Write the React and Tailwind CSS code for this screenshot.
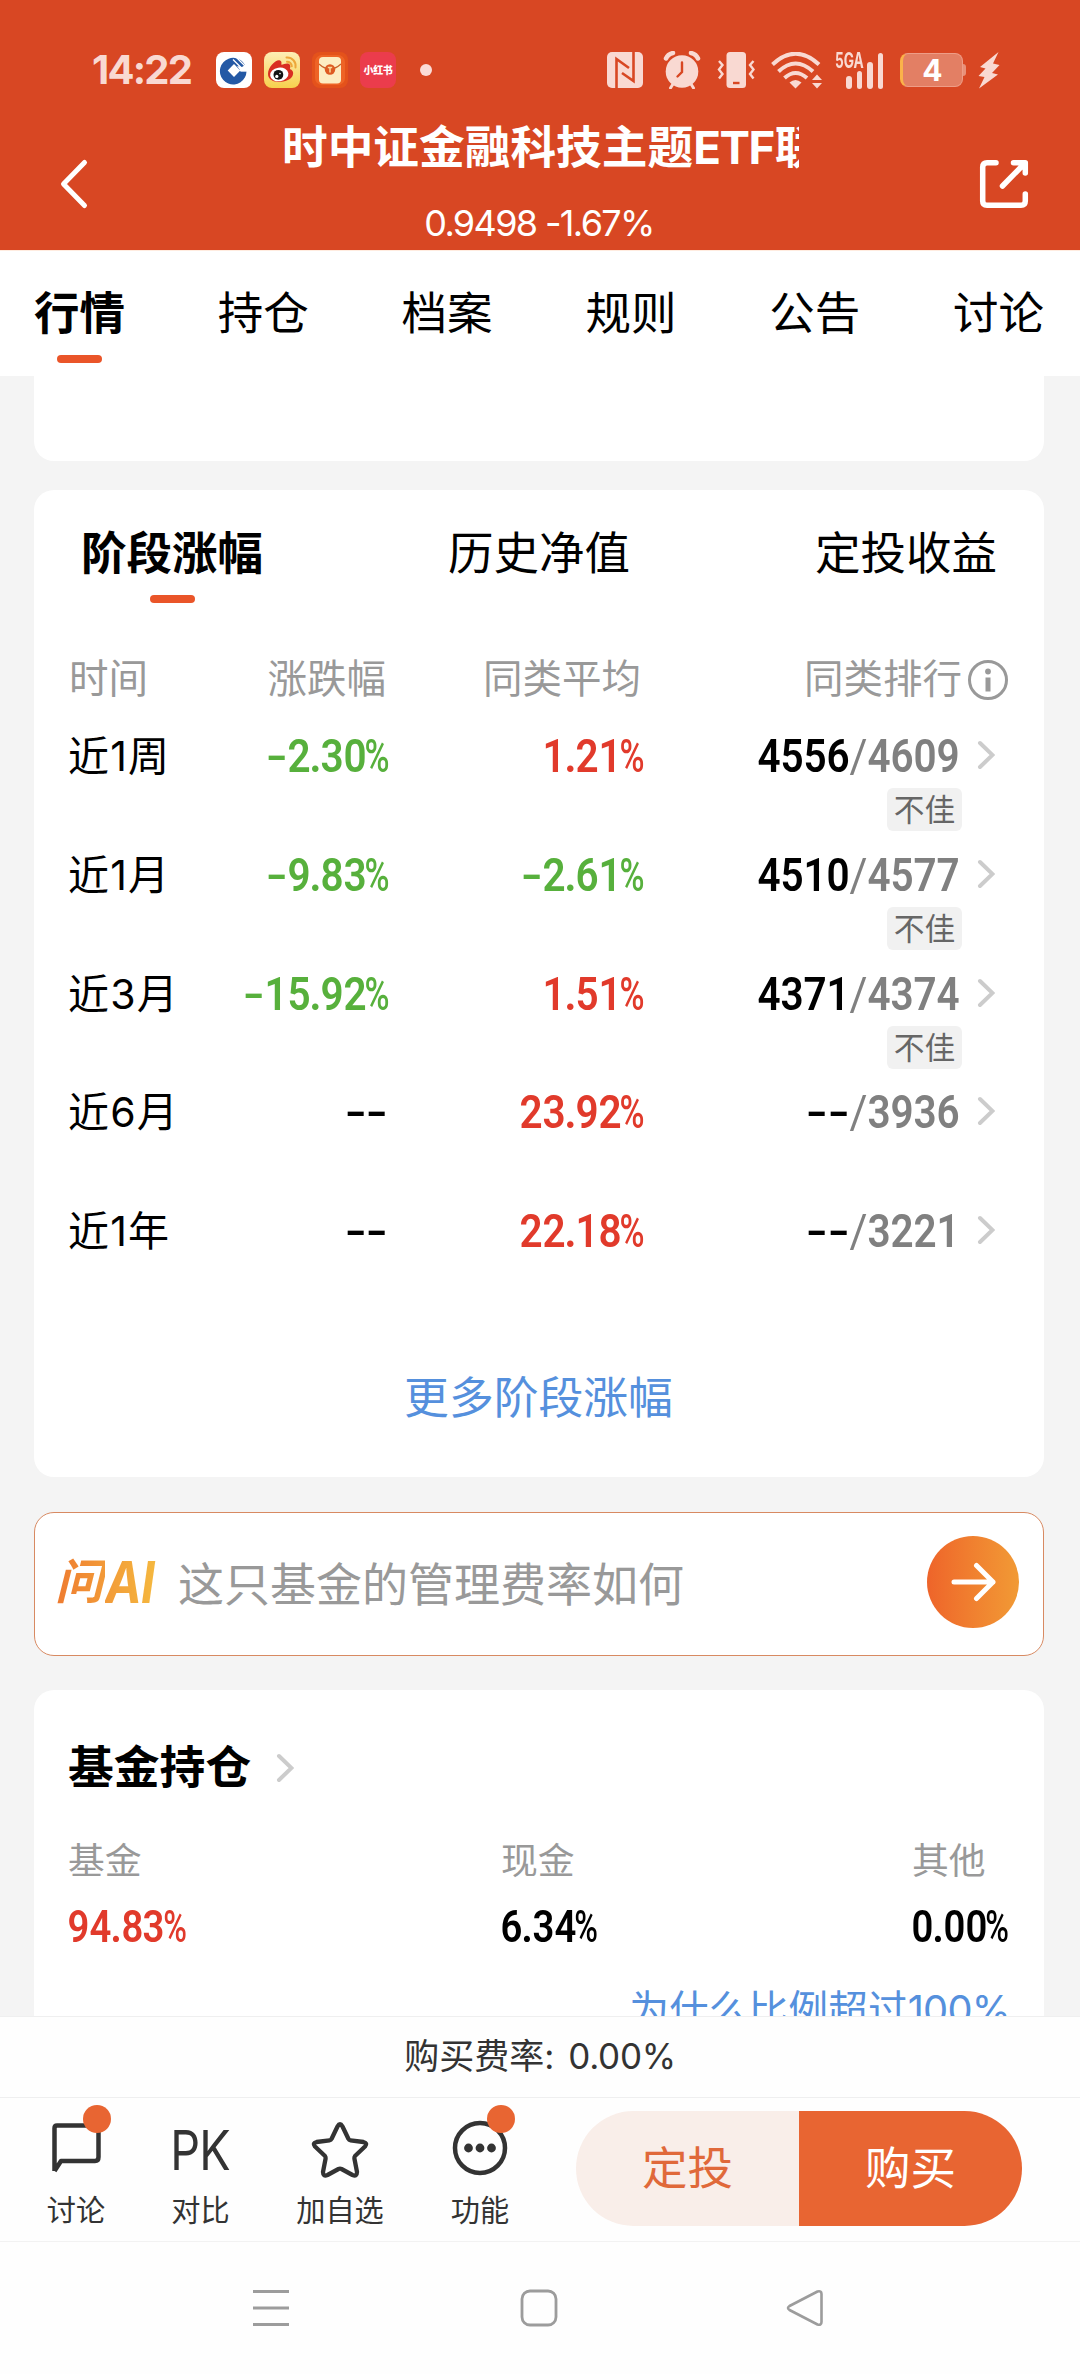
const tabs = ["行情", "持仓", "档案", "规则", "公告", "讨论"];

const periods = [
  { id: 1, name: "近1周", change: "-2.30%", average: "1.21%", rank: "4556", total: "4609", tag: "不佳" },
  { id: 2, name: "近1月", change: "-9.83%", average: "-2.61%", rank: "4510", total: "4577", tag: "不佳" },
  { id: 3, name: "近3月", change: "-15.92%", average: "1.51%", rank: "4371", total: "4374", tag: "不佳" },
  { id: 4, name: "近6月", change: "--", average: "23.92%", rank: "--", total: "3936" },
  { id: 5, name: "近1年", change: "--", average: "22.18%", rank: "--", total: "3221" }
];

const holdings = [
  { id: 1, name: "基金", value: "94.83%", color: "text-[#e13a2b]", width: "w-[433px]" },
  { id: 2, name: "现金", value: "6.34%", color: "text-black", width: "w-[411px]" },
  { id: 3, name: "其他", value: "0.00%", color: "text-black", width: "w-[96px]" }
];

// Character cells for the condensed number face
function cell(char) {
  if (char === "-") return { box: "w-[0.47em]", glyph: "scale-x-[1.35] font-medium" };
  if (char === ".") return { box: "w-[0.22em]", glyph: "scale-x-[0.95]" };
  if (char === "/") return { box: "w-[0.4em]", glyph: "scale-x-[0.95] font-normal" };
  if (char === "%") return { box: "w-[0.47em]", glyph: "scale-x-[0.74] font-medium" };
  return { box: "w-[0.5em]", glyph: "scale-x-[0.88]" };
}

function Num({ text, className }) {
  return (
    <span className={`flex font-[Roboto,sans-serif] font-semibold ${className}`}>
      {text.split("").map((char, i) => (
        <span key={i} className={`flex justify-center ${cell(char).box}`}>
          <span className={cell(char).glyph}>{char}</span>
        </span>
      ))}
    </span>
  );
}

function toneOf(text) {
  if (text === "--") return "text-black";
  return text.startsWith("-") ? "text-[#57b03c]" : "text-[#e13a2b]";
}

function Chevron() {
  return (
    <svg className="w-[18px] h-[30px]" viewBox="0 0 18 30" fill="none" stroke="#cccccc" strokeWidth="4" strokeLinecap="round">
      <path d="M3 3 L15.5 15 L3 27" />
    </svg>
  );
}

function StatusBar() {
  return (
    <div className="flex items-center h-[94px] pt-[46px] pl-[92px] text-[#f9d9d2]">
      <span className="w-[124px] text-[40px] font-bold leading-[48px] tracking-[-1.800px]">14:22</span>
      <div className="flex gap-3">
        <svg className="w-9 h-9" viewBox="0 0 36 36">
          <rect width="36" height="36" rx="8" fill="#fff" />
          <path d="M29 13 A13.3 13.3 0 1 0 30.5 19.5 L25 19.5 L21 14 L26 15z" fill="#2459a5" />
          <path d="M18 12 L24.3 18.5 L18 25 L11.700 18.500z" fill="#fff" />
          <path d="M20 5 L29 14 M17 7.500 L25 15.500" stroke="#fff" strokeWidth="1.300" />
          <path d="M24 18.600 H31" stroke="#fff" strokeWidth="1.500" />
        </svg>
        <svg className="w-9 h-9" viewBox="0 0 36 36">
          <defs>
            <linearGradient id="weibo" x1="0" y1="0" x2="0" y2="1">
              <stop offset="0" stopColor="#fdeeb5" />
              <stop offset="1" stopColor="#f7d04d" />
            </linearGradient>
          </defs>
          <rect width="36" height="36" rx="8" fill="url(#weibo)" />
          <path d="M4 22 C4 15 12 7 16 8.500 C18.500 9.500 17 12.500 17.500 12.800 C20 12 24.500 10 26 13 C27 15 25.500 17 26 17.300 C29 18 30 21 28.500 24 C25 31.500 4 33 4 22z" fill="#d92e22" />
          <ellipse cx="15.200" cy="22.500" rx="9.200" ry="6.800" fill="#fff" transform="rotate(-8 15 22)" />
          <circle cx="14.400" cy="22.800" r="4.900" fill="#141414" />
          <circle cx="12.800" cy="24.400" r="1.600" fill="#fff" />
          <circle cx="16" cy="21.600" r="0.800" fill="#fff" />
          <path d="M22.500 5.500 A8.500 8.500 0 0 1 31.500 15.500 M23 9.800 A4.600 4.600 0 0 1 27.800 14.200" fill="none" stroke="#eda73a" strokeWidth="2" strokeLinecap="round" />
        </svg>
        <svg className="w-9 h-9" viewBox="0 0 36 36">
          <rect width="36" height="36" rx="8" fill="#e4521b" />
          <rect x="3" y="3" width="30" height="30" rx="7" fill="#ee6426" />
          <rect x="7" y="5" width="22" height="26.500" rx="4" fill="#fdecc2" />
          <path d="M7 12 Q18 22 29 12" fill="none" stroke="#c8622a" strokeWidth="1.200" />
          <circle cx="18" cy="17.500" r="5.200" fill="#de5a22" />
          <path d="M15.800 15.500 H20.200 M18 15.500 V20.500" stroke="#fbd99a" strokeWidth="1.500" />
        </svg>
        <div className="flex items-center justify-center w-9 h-9 rounded-lg bg-[#eb3c4c] text-white text-[10px] font-black tracking-[-0.3px]">
          小红书
        </div>
      </div>
      <span className="w-3 h-3 ml-6 rounded-full bg-[#fbdcd6]" />

      <div className="flex items-center ml-[175px]">
        <svg className="w-9 h-9" viewBox="0 0 36 36">
          <rect width="36" height="36" rx="5" fill="currentColor" />
          <path d="M9.500 36 V7 L22 16 M26.500 0 V29 L15 21" fill="none" stroke="#d84723" strokeWidth="2.600" />
        </svg>
        <svg className="w-[38px] h-[38px] ml-5" viewBox="0 0 38 38" fill="none" stroke="currentColor" strokeLinecap="round">
          <circle cx="19" cy="20.500" r="16.300" fill="currentColor" stroke="none" />
          <path d="M3 7.500 Q5 3 10 2 M28 2 Q33 3 35 7.500" strokeWidth="4.500" />
          <path d="M10 33 L7.500 37 M28 33 L30.500 37" strokeWidth="3" />
          <path d="M19 11.500 V21 L14.500 25.500" stroke="#d84723" strokeWidth="2.400" />
        </svg>
        <svg className="w-[38px] h-9 ml-4" viewBox="0 0 38 36" fill="none" stroke="currentColor" strokeWidth="2.400">
          <rect x="9.500" y="0" width="19.500" height="36" rx="3.500" fill="currentColor" stroke="none" />
          <path d="M2 9 L5.500 13 L2 17.500 L5.500 22 L2 26.500 M36.500 9 L33 13 L36.500 17.500 L33 22 L36.500 26.500" />
          <path d="M16 31 H22.500" stroke="#d84723" />
        </svg>
        <svg className="w-[52px] h-[37px] ml-4" viewBox="0 0 52 37" fill="none" stroke="currentColor" strokeWidth="4">
          <path d="M1.500 12.500 Q24.500 -9 48 12.500 M7.500 19.500 Q24.500 3.500 42 19.500 M13.500 26 Q24.500 16 36 26" />
          <path d="M18.500 30.500 Q24.500 25.500 30.500 30.500 L24.500 36.500z" fill="currentColor" stroke="none" />
          <path d="M46 22.500 L51 28 H41z M46 36.500 L51 31 H41z" fill="currentColor" stroke="none" />
        </svg>
        <div className="relative ml-3 w-12 h-[37px]">
          <span className="absolute left-0 -top-px text-[21px] leading-[20px] font-bold origin-left scale-x-[0.65]">5GA</span>
          <div className="flex items-end justify-end gap-[5px] h-full pt-px">
            <span className="w-[5.500px] h-[13px] rounded-sm bg-current" />
            <span className="w-[5.500px] h-[18px] rounded-sm bg-current" />
            <span className="w-[5.500px] h-[27px] rounded-sm bg-current" />
            <span className="w-[5.500px] h-9 rounded-sm bg-current" />
          </div>
        </div>
        <div className="flex items-center ml-[17px]">
          <div className="flex items-center justify-center w-[63px] h-[34px] rounded-[8px] border border-[#ee9d87] border-l-[3px] border-l-[#fbb24a] bg-[#e37f64] text-white text-[30px] font-bold">
            4
          </div>
          <span className="w-[3px] h-3 rounded-r bg-[#e8917a]" />
        </div>
        <svg className="w-[22px] h-[38px] ml-3" viewBox="0 0 22 38" fill="currentColor">
          <path d="M20.500 1 L2 16 L7.500 17.500 L0.500 25 L6.500 26 L1 37.500 L20 23.500 L14 22 L21.500 14 L15 12.500z" />
        </svg>
      </div>
    </div>
  );
}

function Header() {
  return (
    <header className="h-[251px] shrink-0 bg-[#d84723] border-b border-[#ffece0]">
      <StatusBar />
      <div className="flex justify-between pl-[59px] pr-[50px] pt-[24px] text-white">
        <svg className="w-[30px] h-[52px] mt-10" viewBox="0 0 30 52" fill="none" stroke="currentColor" strokeWidth="5" strokeLinecap="round" strokeLinejoin="round">
          <path d="M25.500 4.500 L4.500 26 L25.500 47.500" />
        </svg>
        <div className="w-[516px] ml-[15px] mt-[2px]">
          <div className="-ml-px overflow-hidden whitespace-nowrap text-[45.700px] leading-[56px] font-bold">
            时中证金融科技主题<span className="tracking-[-1.500px] mr-[1px]">ETF</span>联接C
          </div>
          <div className="mt-[24px] -ml-1 text-center text-[36px] leading-[46px] tracking-[-1.650px]">0.9498 -1.67%</div>
        </div>
        <svg className="w-[52px] h-[52px] mt-10" viewBox="0 0 52 52" fill="none" stroke="currentColor" strokeWidth="5.500" strokeLinecap="round" strokeLinejoin="round">
          <path d="M18 4.700 H9 Q4.700 4.700 4.700 9 V43 Q4.700 47.300 9 47.300 H43 Q47.300 47.300 47.300 43 V36" />
          <path d="M35.500 4.700 H47.300 V15 M46.500 5.500 L24.500 28" />
        </svg>
      </div>
    </header>
  );
}

function StageCard() {
  return (
    <section className="h-[987px] mt-[29px] ml-[34px] mr-9 rounded-[20px] bg-white">
      <div className="flex justify-between px-[47px] pt-9 h-[167px] text-[45.500px] leading-[56px]">
        <div className="flex flex-col items-center font-bold">
          阶段涨幅
          <span className="w-[45px] h-2 mt-[13px] rounded-full bg-[#ea5529]" />
        </div>
        <div>历史净值</div>
        <div>定投收益</div>
      </div>

      <div className="flex items-center h-[46px] pl-[35px] text-[39.500px] text-[#999999]">
        <span className="w-[120px]">时间</span>
        <span className="w-[197px] text-right">涨跌幅</span>
        <span className="w-[255px] text-right">同类平均</span>
        <span className="w-[321px] text-right">同类排行</span>
        <svg className="w-[42px] h-[42px] ml-[5px] -mt-px" viewBox="0 0 42 42" fill="none" stroke="#999999">
          <circle cx="21" cy="21" r="18.500" strokeWidth="3" />
          <path d="M21 18.500 V32.500" strokeWidth="5" />
          <circle cx="21" cy="12.500" r="2.900" fill="#999999" stroke="none" />
        </svg>
      </div>

      <div className="pt-[30px]">
        {periods.map((row) => (
          <div key={row.id} className="flex h-[118.750px] pl-[34px] text-[46px] leading-[46px]">
            <span className="w-[140px] text-[41px] tracking-[1.200px] whitespace-nowrap">{row.name}</span>
            <Num text={row.change} className={`w-[180px] justify-end ${toneOf(row.change)}`} />
            <Num text={row.average} className={`w-[255px] justify-end ${toneOf(row.average)}`} />
            <div className="flex flex-col items-end w-[317px]">
              <div className="flex">
                <Num text={row.rank} className="text-black" />
                <Num text={"/" + row.total} className="text-[#808080]" />
              </div>
              {row.tag && (
                <span className="mt-[9px] -mr-[2px] w-[75px] h-[43px] rounded-md bg-[#f1f1f1] text-center text-[30.700px] leading-[43px] text-[#666666]">
                  {row.tag}
                </span>
              )}
            </div>
            <div className="ml-[17px] mt-[7px]">
              <Chevron />
            </div>
          </div>
        ))}
      </div>

      <div className="mt-[46px] pr-px text-center text-[44.800px] leading-[50px] text-[#5590dd]">更多阶段涨幅</div>
    </section>
  );
}

function AskBar() {
  return (
    <section className="flex items-center h-36 mt-[35px] ml-[34px] mr-9 pl-[20px] pr-6 rounded-[20px] border-[1.500px] border-[#d88a62] bg-white">
      <div className="flex items-center w-[123px] h-[60px] -mt-1 whitespace-nowrap font-bold italic">
        <span className="inline-block w-[50px] pr-1 text-[48px] leading-[60px] bg-linear-to-r from-[#ee7a30] to-[#f29a38] bg-clip-text text-transparent">问</span>
        <span className="inline-block origin-left scale-x-[0.85] pr-3 text-[58px] leading-[60px] tracking-[-1px] bg-linear-to-r from-[#f29a38] to-[#f5bd40] bg-clip-text text-transparent">AI</span>
      </div>
      <span className="grow text-[46px] text-[#999999]">这只基金的管理费率如何</span>
      <span className="flex items-center justify-center w-[92px] h-[92px] -mt-1 rounded-full bg-linear-to-r from-[#ee642a] to-[#f19a35]">
        <svg className="w-[46px] h-[42px]" viewBox="0 0 46 42" fill="none" stroke="#fff" strokeWidth="5" strokeLinecap="round" strokeLinejoin="round">
          <path d="M4 21 H43 M26.500 4.500 L43 21 L26.500 37.500" />
        </svg>
      </span>
    </section>
  );
}

function HoldingsCard() {
  return (
    <section className="h-[400px] mt-[34px] ml-[34px] mr-9 pl-[34px] pt-[50px] rounded-t-[20px] bg-white">
      <div className="flex items-center gap-[25px] h-14 text-[45.800px] font-bold">
        基金持仓
        <Chevron />
      </div>
      <div className="flex mt-[42px]">
        {holdings.map((item) => (
          <div key={item.id} className={item.width}>
            <div className="text-[36.800px] leading-[46px] text-[#999999]">{item.name}</div>
            <Num text={item.value} className={`mt-[21px] text-[43.500px] leading-[46px] ${item.color}`} />
          </div>
        ))}
      </div>
      <div className="mt-[34px] pr-[34px] text-right text-[39.800px] leading-[50px] text-[#5590dd]">
        为什么比例超过<span className="tracking-[-0.800px]">100%</span>
      </div>
    </section>
  );
}

function Action({ label, dot, className, children }) {
  return (
    <div className={`flex flex-col items-center shrink-0 ${className}`}>
      <div className="relative flex items-center justify-center h-[56px]">
        {children}
        {dot && <span className={`absolute -top-[17px] w-7 h-7 rounded-full bg-[#e86532] ${dot}`} />}
      </div>
      <span className="mt-[13px] text-[29.200px] leading-[40px]">{label}</span>
    </div>
  );
}

function ActionBar() {
  return (
    <div className="flex h-[143px] pl-[26px] text-[#333333]">
      <Action label="讨论" dot="-right-[10px]" className="w-[100px] pt-6">
        <svg className="w-[50px] h-[52px] -mt-1" viewBox="0 0 50 52" fill="none" stroke="currentColor" strokeWidth="4.500" strokeLinejoin="round">
          <path d="M3.500 49 V6 Q3.500 3.500 6 3.500 H44 Q47.500 3.500 47.500 7 V35 Q47.500 39 44 39 H10 L3.500 49" />
        </svg>
      </Action>
      <Action label="对比" className="w-[149px] pt-6">
        <span className="flex justify-center w-[56px] text-[55px] leading-[58px] tracking-[-1px]">
          <span className="scale-x-[0.85]">PK</span>
        </span>
      </Action>
      <Action label="加自选" className="w-[130px] pt-6">
        <svg className="w-[58px] h-[58px]" viewBox="0 0 58 58" fill="none" stroke="currentColor" strokeWidth="4.300" strokeLinejoin="round">
          <path d="M26.500 5.500 Q29 1 31.500 5.500 L37.500 18 Q38 19.200 39.500 19.400 L52.500 21 Q57 22 54 25.500 L44 35 Q43.200 36 43.400 37.500 L46 51 Q46 55.800 41.500 54 L30.500 48 Q29 47.300 27.500 48 L16.500 54 Q12 55.800 12 51 L14.600 37.500 Q14.800 36 14 35 L4 25.500 Q1 22 5.500 21 L18.500 19.400 Q20 19.200 20.500 18z" />
        </svg>
      </Action>
      <Action label="功能" dot="-right-[7px]" className="w-[150px] pt-6">
        <svg className="w-[56px] h-[56px] -mt-1" viewBox="0 0 56 56" fill="none" stroke="currentColor" strokeWidth="4.500">
          <circle cx="28" cy="28" r="25" />
          <g fill="currentColor" stroke="none">
            <circle cx="16.500" cy="28" r="4.400" />
            <circle cx="28" cy="28" r="4.400" />
            <circle cx="39.500" cy="28" r="4.400" />
          </g>
        </svg>
      </Action>
      <div className="flex w-[446px] h-[115px] ml-[21px] mt-[13px] rounded-full overflow-hidden text-[45.500px] leading-[116px] text-center">
        <div className="w-1/2 bg-[#f9eee9] text-[#e0693a]">定投</div>
        <div className="w-1/2 bg-[#e86532] text-white">购买</div>
      </div>
    </div>
  );
}

export default function App() {
  return (
    <div className="flex flex-col w-[1080px] h-[2374px] overflow-hidden bg-[#f4f4f4] text-black font-[Inter,'Noto_Sans_CJK_SC',sans-serif]">
      <Header />

      {/* Page tabs */}
      <nav className="flex justify-between h-[125px] shrink-0 pl-[34px] pr-9 pt-[35px] bg-white text-[45.500px] leading-[56px]">
        {tabs.map((name, i) => (
          <div key={name} className={`flex flex-col items-center ${i === 0 ? "font-bold" : ""}`}>
            {name}
            {i === 0 && <span className="w-[45px] h-2 mt-[13px] rounded-full bg-[#ea5529]" />}
          </div>
        ))}
      </nav>

      {/* Scrolled content */}
      <main className="h-[1640px] shrink-0 overflow-hidden">
        <section className="h-[85px] ml-[34px] mr-9 rounded-b-[20px] bg-white" />
        <StageCard />
        <AskBar />
        <HoldingsCard />
      </main>

      {/* Fee and trade actions */}
      <footer className="grow bg-[#fefefe]">
        <div className="h-[82px] border-t border-b border-[#efefef] text-center text-[35px] leading-[79px] text-[#333333]">
          购买费率:<span className="ml-[14px] tracking-[-0.300px]">0.00%</span>
        </div>
        <ActionBar />
        <div className="flex justify-between items-center h-[133px] pl-[252px] pr-[256px] border-t border-[#f2f2f2]">
          <svg className="w-[38px] h-[38px]" viewBox="0 0 38 38" stroke="#9c9c9c" strokeWidth="3.200">
            <path d="M1 2.500 H37 M1 19 H37 M1 35.500 H37" />
          </svg>
          <svg className="w-[38px] h-[38px] ml-0.5" viewBox="0 0 38 38" fill="none" stroke="#9c9c9c" strokeWidth="2.800">
            <rect x="2" y="2" width="34" height="34" rx="8" />
          </svg>
          <svg className="w-[38px] h-[38px]" viewBox="0 0 38 38" fill="none" stroke="#9c9c9c" strokeWidth="2.600" strokeLinejoin="round">
            <path d="M31.500 2.500 Q35.500 1.500 35.500 5 V33 Q35.500 36.500 31.500 35.500 L3.500 21 Q0.500 19 3.500 17z" />
          </svg>
        </div>
      </footer>
    </div>
  );
}
